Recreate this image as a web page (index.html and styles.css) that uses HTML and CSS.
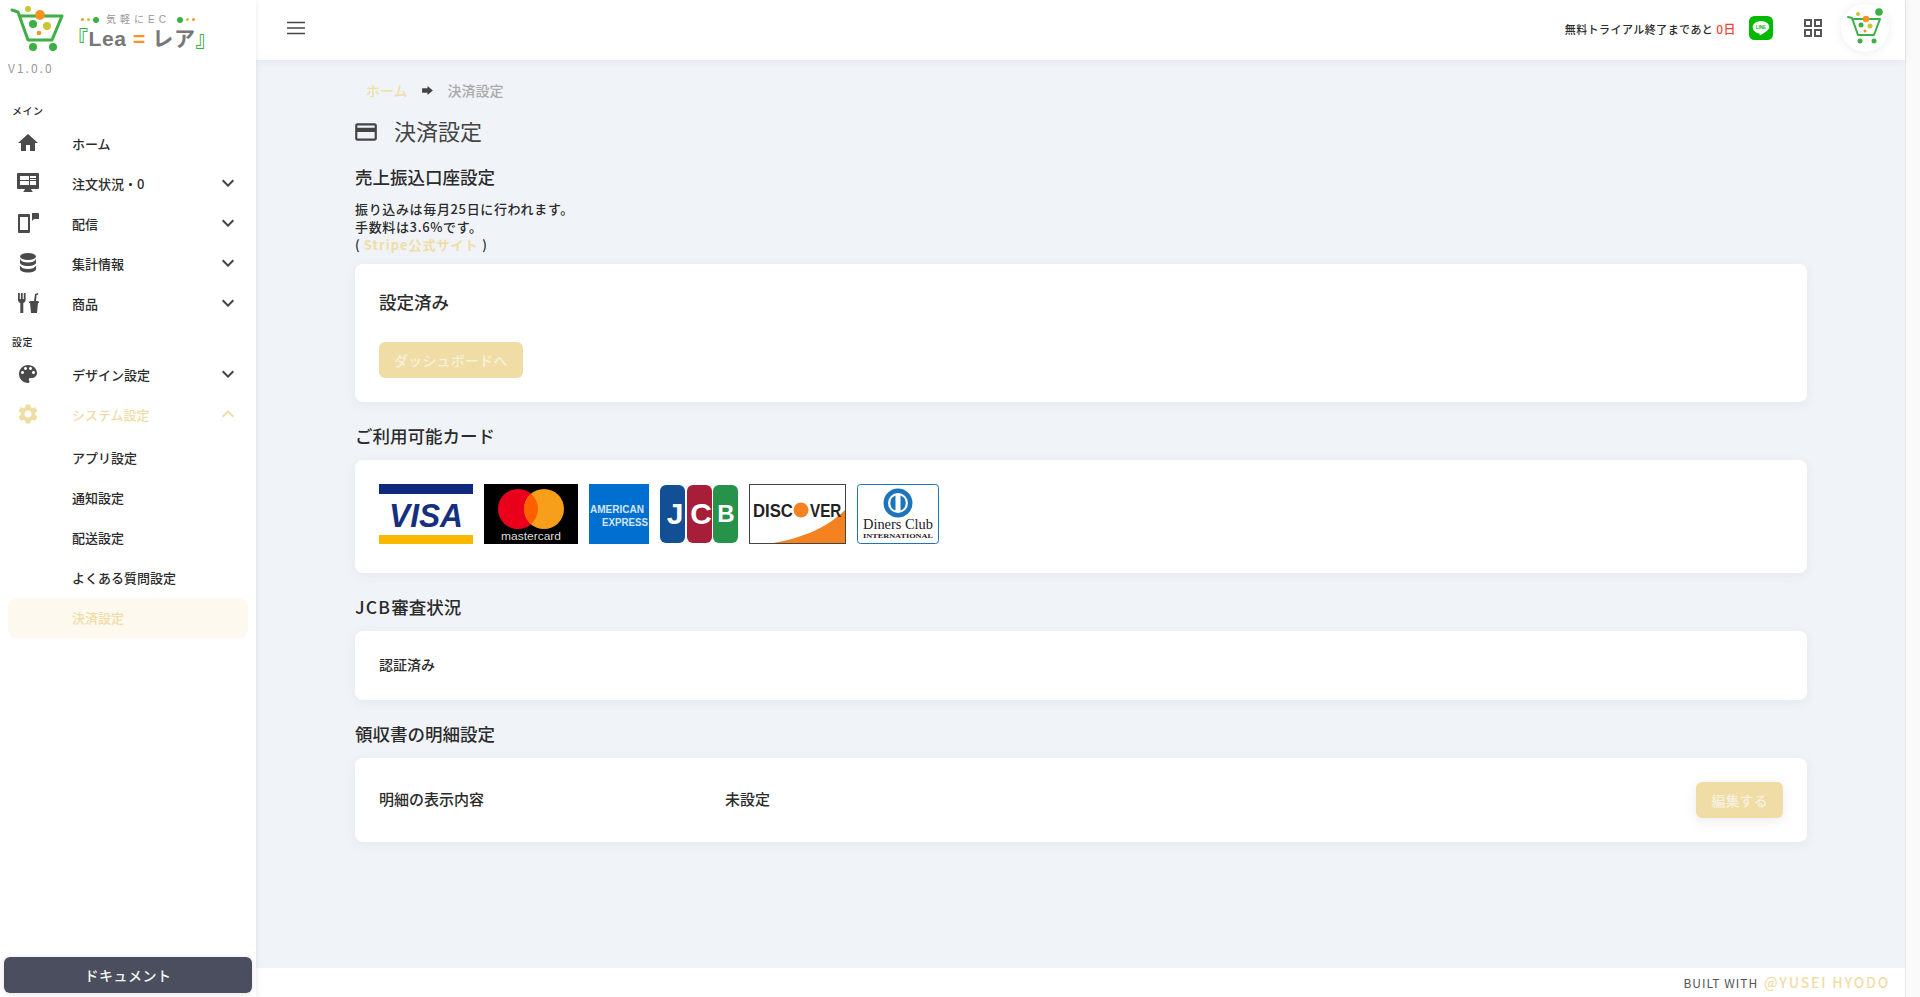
FILE: index.html
```html
<!DOCTYPE html>
<html lang="ja">
<head>
    <meta charset="UTF-8">
    <title>決済設定</title>
    <link rel="stylesheet" href="styles.css">
</head>
<body>
<div class="app">

    <!-- Sidebar -->
    <aside class="sidebar">
        <div class="brand">
            <div class="brand-row">
                <svg class="brand-cart" viewBox="0 0 66 52">
                    <path d="M12 9l6 2 10 28h24l10-24H20" fill="none" stroke="#3cb043" stroke-width="3" stroke-linejoin="round" stroke-linecap="round"/>
                    <circle cx="33" cy="46" r="4" fill="#3cb043"/><circle cx="53" cy="46" r="4" fill="#3cb043"/>
                    <circle cx="28" cy="8" r="3" fill="#c9c62f"/><circle cx="40" cy="14" r="5" fill="#f7931e"/>
                    <circle cx="33" cy="23" r="4" fill="#3cb043"/><circle cx="47" cy="25" r="4" fill="#c9c62f"/>
                    <circle cx="39" cy="32" r="2.3" fill="#f7931e"/>
                </svg>
                <div class="brand-text">
                    <div class="brand-sub">
                        <span class="dot dot-s orange-bg"></span><span class="dot dot-s yellow-bg"></span><span class="dot green-bg"></span>
                        <span class="brand-sub-text">気軽にEC</span>
                        <span class="dot green-bg"></span><span class="dot dot-s yellow-bg"></span><span class="dot dot-s orange-bg"></span>
                    </div>
                    <div class="brand-name"><span class="green">『</span>Lea <span class="orange">=</span> レア<span class="green">』</span></div>
                </div>
            </div>
            <div class="version">V1.0.0</div>
        </div>

        <div class="nav-label">メイン</div>
        <a class="nav-item">
            <svg class="icon" viewBox="0 0 24 24"><path d="M10 20v-6h4v6h5v-8h3L12 3 2 12h3v8z"/></svg>
            <span class="nav-text">ホーム</span>
        </a>
        <a class="nav-item">
            <svg class="icon" viewBox="0 0 24 24"><path fill-rule="evenodd" d="M2 2h20a1 1 0 011 1v14a1 1 0 01-1 1h-7l1 2 1 1H7l1-1 1-2H2a1 1 0 01-1-1V3a1 1 0 011-1zm2 3v4h9V5zm10 0v2h6V5zm0 3v1h6V8zM4 10v4h9v-4zm10 0v4h6v-4z"/></svg>
            <span class="nav-text">注文状況・0</span>
            <svg class="chevron" viewBox="0 0 24 24"><path d="M7.41 8.59L12 13.17l4.59-4.58L18 10l-6 6-6-6z"/></svg>
        </a>
        <a class="nav-item">
            <svg class="icon" viewBox="0 0 24 24"><path fill-rule="evenodd" d="M3 3h10a1 1 0 011 1v17a1 1 0 01-1 1H3a1 1 0 01-1-1V4a1 1 0 011-1zm1 3v13h8V6z"/><path d="M16 2h6a1 1 0 011 1v5h-5l-2 2z"/></svg>
            <span class="nav-text">配信</span>
            <svg class="chevron" viewBox="0 0 24 24"><path d="M7.41 8.59L12 13.17l4.59-4.58L18 10l-6 6-6-6z"/></svg>
        </a>
        <a class="nav-item">
            <svg class="icon" viewBox="0 0 24 24"><ellipse cx="12" cy="5.5" rx="8" ry="3.5"/><path d="M4 8c1 2.500 4 3.500 8 3.500s7-1 8-3.500v3.500c0 2-3.600 3.500-8 3.500s-8-1.500-8-3.500z"/><path d="M4 14.500c1 2.500 4 3.500 8 3.500s7-1 8-3.500V18c0 2-3.600 3.500-8 3.500S4 20 4 18z"/></svg>
            <span class="nav-text">集計情報</span>
            <svg class="chevron" viewBox="0 0 24 24"><path d="M7.41 8.59L12 13.17l4.59-4.58L18 10l-6 6-6-6z"/></svg>
        </a>
        <a class="nav-item">
            <svg class="icon" viewBox="0 0 24 24"><path d="M2 2h1.800v6h1.100V2h1.800v6h1.100V2h1.800v7c0 1.500-1 2.500-2.300 3v10H4.300V12C3 11.500 2 10.500 2 9z"/><path d="M14.500 10h7.500l1 1v1h-1l-1 10h-6l-1-10h-1v-1zM18 10l1-7 3-1 .4 1.500-1.800.6-.6 5.900z"/></svg>
            <span class="nav-text">商品</span>
            <svg class="chevron" viewBox="0 0 24 24"><path d="M7.41 8.59L12 13.17l4.59-4.58L18 10l-6 6-6-6z"/></svg>
        </a>

        <div class="nav-label second">設定</div>
        <a class="nav-item">
            <svg class="icon" viewBox="0 0 24 24"><path d="M12 3c-4.970 0-9 4.030-9 9s4.030 9 9 9c.83 0 1.500-.67 1.500-1.500 0-.39-.15-.74-.39-1.010-.23-.26-.38-.61-.38-.99 0-.83.67-1.500 1.500-1.500H16c2.760 0 5-2.240 5-5 0-4.420-4.030-8-9-8zm-5.500 9c-.83 0-1.500-.67-1.500-1.500S5.670 9 6.500 9 8 9.670 8 10.500 7.330 12 6.500 12zm3-4C8.670 8 8 7.330 8 6.500S8.670 5 9.500 5s1.500.67 1.500 1.500S10.330 8 9.500 8zm5 0c-.83 0-1.500-.67-1.500-1.500S13.670 5 14.500 5s1.500.67 1.500 1.500S15.330 8 14.500 8zm3 4c-.83 0-1.500-.67-1.500-1.500S16.670 9 17.500 9s1.500.67 1.500 1.500-.67 1.500-1.500 1.500z"/></svg>
            <span class="nav-text">デザイン設定</span>
            <svg class="chevron" viewBox="0 0 24 24"><path d="M7.41 8.59L12 13.17l4.59-4.58L18 10l-6 6-6-6z"/></svg>
        </a>
        <a class="nav-item open">
            <svg class="icon" viewBox="0 0 24 24"><path d="M19.140 12.940c.04-.3.06-.61.06-.94 0-.32-.02-.64-.07-.94l2.030-1.580c.18-.14.23-.41.12-.61l-1.920-3.320c-.12-.22-.37-.29-.59-.22l-2.390.96c-.5-.38-1.030-.7-1.620-.94l-.36-2.540c-.04-.24-.24-.41-.48-.41h-3.840c-.24 0-.43.17-.47.41l-.36 2.540c-.59.24-1.130.57-1.620.94l-2.390-.96c-.22-.08-.47 0-.59.22L2.740 8.870c-.12.21-.08.47.12.61l2.030 1.580c-.05.3-.09.63-.09.94s.02.64.07.94l-2.030 1.580c-.18.14-.23.41-.12.61l1.920 3.320c.12.22.37.29.59.22l2.390-.96c.5.38 1.030.7 1.620.94l.36 2.540c.05.24.24.41.48.41h3.840c.24 0 .44-.17.47-.41l.36-2.540c.59-.24 1.130-.56 1.620-.94l2.390.96c.22.08.47 0 .59-.22l1.920-3.320c.12-.22.07-.47-.12-.61l-2.010-1.580zM12 15.600c-1.980 0-3.600-1.620-3.600-3.600s1.620-3.600 3.600-3.600 3.600 1.620 3.600 3.600-1.620 3.600-3.600 3.600z"/></svg>
            <span class="nav-text">システム設定</span>
            <svg class="chevron" viewBox="0 0 24 24"><path d="M12 8l-6 6 1.410 1.410L12 10.830l4.590 4.580L18 14z"/></svg>
        </a>
        <div class="sub-nav">
            <a class="sub-item">アプリ設定</a>
            <a class="sub-item">通知設定</a>
            <a class="sub-item">配送設定</a>
            <a class="sub-item">よくある質問設定</a>
            <a class="sub-item active">決済設定</a>
        </div>

        <button class="doc-btn">ドキュメント</button>
    </aside>

    <div class="right">
        <!-- Header -->
        <header class="topbar">
            <svg class="menu-icon" viewBox="0 0 24 24"><path d="M3 6.500h18M3 12h18M3 17.500h18" stroke="#444" stroke-width="1.700" fill="none"/></svg>
            <div class="trial">無料トライアル終了まであと <span class="red">0日</span></div>
            <svg class="line-icon" viewBox="0 0 24 24">
                <rect width="24" height="24" rx="5.500" fill="#00b900"/>
                <path d="M12 5c-4.700 0-8.300 2.800-8.300 6.300 0 3.100 2.800 5.600 6.600 6.200.6.100.4.800.3 1.500 0 .4.300.5.700.3 1.800-1 6.700-3.900 8.100-6 .6-.8.900-1.300.9-2C20.300 7.800 16.700 5 12 5z" fill="#fff"/>
                <text x="12" y="13" text-anchor="middle" class="line-text">LINE</text>
            </svg>
            <svg class="grid-icon" viewBox="0 0 18 18"><path fill="none" stroke="#555" stroke-width="2" d="M1 1h6v6H1zM11 1h6v6h-6zM1 11h6v6H1zM11 11h6v6h-6z"/></svg>
            <div class="avatar">
                <svg viewBox="0 0 40 40" width="40" height="40">
                    <path d="M3 9l4 1 6 17h16l6-16H9" fill="none" stroke="#3cb043" stroke-width="2" stroke-linejoin="round" stroke-linecap="round"/>
                    <circle cx="15" cy="33" r="2.500" fill="#3cb043"/><circle cx="29" cy="33" r="2.500" fill="#3cb043"/>
                    <circle cx="13" cy="6" r="2" fill="#c9c62f"/><circle cx="21" cy="11" r="3.200" fill="#f7931e"/>
                    <circle cx="16" cy="17" r="2.500" fill="#3cb043"/><circle cx="25" cy="18" r="2.500" fill="#c9c62f"/>
                    <circle cx="20" cy="23" r="1.500" fill="#f7931e"/><circle cx="34" cy="4" r="3.800" fill="#3cb043"/>
                </svg>
            </div>
        </header>

        <main class="main">
            <nav class="breadcrumb">
                <a class="accent">ホーム</a>
                <svg class="crumb-arrow" viewBox="0 0 12 10"><path d="M0 2.500h6V0l6 5-6 5V7.500H0z"/></svg>
                <span>決済設定</span>
            </nav>

            <h1 class="page-title">
                <svg viewBox="0 0 24 24"><path d="M20 4H4c-1.110 0-1.990.89-1.990 2L2 18c0 1.110.89 2 2 2h16c1.110 0 2-.89 2-2V6c0-1.110-.89-2-2-2zm0 14H4v-6h16v6zm0-10H4V6h16v2z"/></svg>
                決済設定
            </h1>

            <h2 class="section-title first">売上振込口座設定</h2>
            <p class="note">振り込みは毎月25日に行われます。<br>手数料は3.6%です。<br>( <a class="accent strong">Stripe公式サイト</a> )</p>

            <section class="card card-bank">
                <h3 class="card-title">設定済み</h3>
                <button class="btn">ダッシュボードへ</button>
            </section>

            <h2 class="section-title">ご利用可能カード</h2>
            <section class="card card-brands">
                <svg class="brand-logo" width="94" height="60" viewBox="0 0 94 60">
                    <rect width="94" height="60" fill="#fff"/><rect width="94" height="10" fill="#0f2a7c"/><rect y="51" width="94" height="9" fill="#fbb800"/>
                    <text x="10" y="43" class="visa-text" textLength="74" lengthAdjust="spacingAndGlyphs">VISA</text>
                </svg>
                <svg class="brand-logo" width="94" height="60" viewBox="0 0 94 60">
                    <rect width="94" height="60" fill="#000"/>
                    <circle cx="34" cy="25" r="20" fill="#eb001b"/><circle cx="60" cy="25" r="20" fill="#f79e1b"/>
                    <path d="M47 9.800a20 20 0 010 30.400 20 20 0 010-30.400z" fill="#ff5f00"/>
                    <text x="17" y="56" class="mc-text" textLength="60" lengthAdjust="spacingAndGlyphs">mastercard</text>
                </svg>
                <svg class="brand-logo" width="60" height="60" viewBox="0 0 60 60">
                    <rect width="60" height="60" fill="#016fd0"/>
                    <text x="1" y="29" class="amex-text" textLength="54" lengthAdjust="spacingAndGlyphs">AMERICAN</text>
                    <text x="13" y="42" class="amex-text" textLength="46" lengthAdjust="spacingAndGlyphs">EXPRESS</text>
                </svg>
                <svg class="brand-logo" width="78" height="60" viewBox="0 0 78 60">
                    <rect y="1" width="25" height="58" rx="6" fill="#134f95"/>
                    <rect x="27" y="1" width="25" height="58" rx="6" fill="#a61e37"/>
                    <rect x="53" y="1" width="25" height="58" rx="6" fill="#27924a"/>
                    <text x="15" y="40" text-anchor="middle" class="jcb-text">J</text>
                    <text x="41" y="40" text-anchor="middle" class="jcb-text">C</text>
                    <text x="66" y="38" text-anchor="middle" class="jcb-text jcb-b">B</text>
                </svg>
                <svg class="brand-logo" width="97" height="60" viewBox="0 0 97 60">
                    <rect x=".5" y=".5" width="96" height="59" fill="#fff" stroke="#444"/>
                    <path d="M24 59C55 54 80 42 96 26v33z" fill="#f58220"/>
                    <circle cx="52" cy="26" r="7.500" fill="#f58220"/>
                    <text transform="translate(4 33) scale(.88 1)" class="disc-text">DISC</text>
                    <text x="46" y="32" class="disc-text disc-o">O</text>
                    <text transform="translate(61 33) scale(.8 1)" class="disc-text">VER</text>
                </svg>
                <svg class="brand-logo" width="82" height="60" viewBox="0 0 82 60">
                    <rect x=".5" y=".5" width="81" height="59" rx="3" fill="#fff" stroke="#1c75bc"/>
                    <circle cx="41" cy="19" r="14.500" fill="#1c75bc"/><circle cx="41" cy="19" r="10" fill="#fff"/>
                    <path d="M38.500 11.500a8 8 0 000 15zM43.500 11.500a8 8 0 010 15z" fill="#1c75bc"/>
                    <text x="6" y="45" class="diners-text" textLength="70" lengthAdjust="spacingAndGlyphs">Diners Club</text>
                    <text x="6" y="54" class="diners-sub" textLength="70" lengthAdjust="spacingAndGlyphs">INTERNATIONAL</text>
                </svg>
            </section>

            <h2 class="section-title"><span class="latin">JCB</span>審査状況</h2>
            <section class="card card-jcb">認証済み</section>

            <h2 class="section-title">領収書の明細設定</h2>
            <section class="card card-receipt">
                <span class="receipt-label">明細の表示内容</span>
                <span class="receipt-value">未設定</span>
                <button class="btn btn-edit">編集する</button>
            </section>
        </main>

        <footer class="footer">BUILT WITH <a class="accent footer-link">@YUSEI HYODO</a></footer>
    </div>

    <div class="scrollbar"></div>
</div>
</body>
</html>
```

FILE: styles.css
```css
* {
    box-sizing: border-box;
}
body {
    margin: 0;
    background-color: #f0f4f8;
    color: #2b2b2b;
    font-family: "Noto Sans CJK JP", "Noto Sans", sans-serif;
    font-size: 13px;
}
h1, h2, h3, p {
    margin: 0;
}
.app {
    display: flex;
    height: 997px;
    overflow: hidden;
}
.accent {
    color: #f0dda6;
}
.strong {
    font-weight: 700;
    letter-spacing: 1px;
}

/* Sidebar */
.sidebar {
    position: relative;
    z-index: 2;
    display: flex;
    flex-direction: column;
    width: 256px;
    flex-shrink: 0;
    background-color: #fff;
    box-shadow: 0 0 6px rgba(60, 70, 90, 0.12);
}
.brand {
    height: 103px;
    padding-top: 1px;
}
.brand-row {
    display: flex;
    align-items: flex-start;
    height: 52px;
}
.brand-cart {
    flex-shrink: 0;
    width: 66px;
    height: 52px;
    margin-right: 8px;
}
.brand-text {
    padding-top: 11px;
    color: #777;
    font-family: "Liberation Sans", "Noto Sans CJK JP", sans-serif;
}
.brand-sub {
    display: flex;
    align-items: center;
    justify-content: center;
    gap: 3px;
    width: 128px;
    height: 15px;
    color: #999;
}
.brand-sub-text {
    margin: 0 4px;
    font-size: 10px;
    line-height: 15px;
    letter-spacing: 4px;
}
.dot {
    width: 6px;
    height: 6px;
    border-radius: 50%;
}
.dot-s {
    width: 3px;
    height: 3px;
}
.green-bg {
    background-color: #3cb043;
}
.yellow-bg {
    background-color: #c9c62f;
}
.orange-bg {
    background-color: #f7931e;
}
.brand-name {
    height: 24px;
    margin-left: -7px;
    font-size: 21px;
    font-weight: 700;
    line-height: 24px;
    letter-spacing: 0.6px;
    white-space: nowrap;
    color: #777;
}
.green {
    color: #3cb043;
}
.orange {
    color: #f7931e;
}
.version {
    margin-top: 7px;
    padding-left: 8px;
    font-size: 12px;
    line-height: 16px;
    letter-spacing: 2px;
    color: #999;
}
.nav-label {
    height: 20px;
    padding-left: 12px;
    font-size: 10px;
    font-weight: 500;
    line-height: 16px;
    letter-spacing: 0.5px;
}
.nav-label.second {
    margin-top: 11px;
}
.nav-item {
    display: flex;
    align-items: center;
    height: 40px;
    padding: 0 16px;
    color: #2b2b2b;
}
.icon {
    width: 24px;
    height: 24px;
    margin-right: 32px;
    margin-top: -1px;
    fill: #4a4a4a;
}
.nav-text {
    flex: 1;
    font-weight: 500;
}
.chevron {
    width: 24px;
    height: 24px;
    margin-top: -1px;
    fill: #444;
}
.nav-item.open {
    color: #f0dda6;
}
.nav-item.open .icon, .nav-item.open .chevron {
    fill: #f0dda6;
}
.sub-nav {
    margin-top: 4px;
}
.sub-item {
    display: block;
    height: 40px;
    margin: 0 8px;
    padding-left: 64px;
    border-radius: 8px;
    font-weight: 500;
    line-height: 39px;
    color: #2b2b2b;
}
.sub-item.active {
    background-color: #fdf9ef;
    color: #f0dda6;
}
.doc-btn {
    margin: auto 4px 4px;
    height: 36px;
    border: 0;
    border-radius: 6px;
    background-color: #4a4e5e;
    color: #f4f4f4;
    font-family: inherit;
    font-size: 14px;
    font-weight: 500;
    letter-spacing: 0.5px;
    box-shadow: 0 1px 6px rgba(0, 0, 0, 0.12);
}

/* Header */
.right {
    display: flex;
    flex-direction: column;
    flex: 1;
    min-width: 0;
}
.topbar {
    position: relative;
    z-index: 1;
    display: flex;
    align-items: center;
    flex-shrink: 0;
    height: 60px;
    padding: 0 16px 4px 28px;
    background-color: #fff;
    box-shadow: 0 1px 8px rgba(60, 70, 90, 0.08);
}
.menu-icon {
    width: 24px;
    height: 24px;
}
.trial {
    margin-left: auto;
    font-size: 11px;
    font-weight: 500;
    letter-spacing: 0.45px;
}
.red {
    color: #f44336;
    font-size: 12px;
}
.line-icon {
    width: 24px;
    height: 24px;
    margin-left: 13px;
}
.line-text {
    font-family: "Liberation Sans", sans-serif;
    font-size: 4.500px;
    font-weight: 700;
    fill: #00b900;
}
.grid-icon {
    width: 18px;
    height: 18px;
    margin-left: 31px;
}
.avatar {
    display: flex;
    align-items: center;
    justify-content: center;
    width: 48px;
    height: 48px;
    margin-left: 19px;
    border-radius: 50%;
    background-color: #fff;
    box-shadow: 0 1px 8px rgba(60, 70, 90, 0.1);
}

/* Main */
.main {
    flex: 1;
    padding: 20px 98px 0 99px;
    min-height: 0;
}
.breadcrumb {
    display: flex;
    align-items: center;
    height: 20px;
    padding-left: 11px;
    font-size: 14px;
    font-weight: 500;
    color: #aaa;
}
.crumb-arrow {
    width: 11px;
    height: 9px;
    margin: 0 15px 0 14px;
    fill: #444;
}
.page-title {
    display: flex;
    align-items: center;
    height: 32px;
    margin-top: 14px;
    font-size: 22px;
    font-weight: 400;
    color: #444;
}
.page-title svg {
    width: 26px;
    height: 26px;
    margin: 4px 15px 0 -2px;
    fill: #444;
}
.section-title {
    height: 26px;
    margin-top: 22px;
    font-size: 17.500px;
    font-weight: 500;
    line-height: 24px;
}
.section-title.first {
    margin-top: 18px;
    line-height: 26px;
}
.latin {
    letter-spacing: 1.200px;
}
.note {
    margin-top: 10px;
    font-size: 13px;
    font-weight: 500;
    line-height: 18px;
    letter-spacing: 0.650px;
    height: 54px;
}
.card {
    border-radius: 8px;
    background-color: #fff;
    box-shadow: 0 2px 12px rgba(60, 70, 90, 0.07);
    padding: 0 24px;
}
.card-bank {
    height: 138px;
    margin-top: 10px;
    padding-top: 25px;
}
.card-title {
    height: 26px;
    font-size: 17.500px;
    font-weight: 500;
    line-height: 26px;
}
.btn {
    display: block;
    height: 36px;
    margin-top: 27px;
    padding: 0 15px;
    border: 0;
    border-radius: 6px;
    background-color: #f0dda6;
    color: #f7f1dc;
    font-family: inherit;
    font-size: 14px;
    font-weight: 500;
    letter-spacing: 0.2px;
}
.card-brands {
    display: flex;
    gap: 11px;
    height: 113px;
    margin-top: 10px;
    padding-top: 24px;
}
.brand-logo {
    flex-shrink: 0;
}
.visa-text {
    font-family: "Liberation Sans", sans-serif;
    font-size: 34px;
    font-weight: 700;
    font-style: italic;
    fill: #14307f;
}
.mc-text {
    font-family: "Liberation Sans", sans-serif;
    font-size: 11px;
    fill: #ddd;
}
.amex-text {
    font-family: "Liberation Sans", sans-serif;
    font-size: 10px;
    font-weight: 700;
    fill: #d3e6f8;
}
.jcb-text {
    font-family: "Liberation Sans", sans-serif;
    font-size: 30px;
    font-weight: 700;
    fill: #fff;
}
.jcb-b {
    font-size: 24px;
}
.disc-text {
    font-family: "Liberation Sans", sans-serif;
    font-size: 19px;
    font-weight: 700;
    fill: #222;
}
.disc-o {
    font-size: 16px;
    fill: #f58220;
}
.diners-text {
    font-family: "Liberation Serif", serif;
    font-size: 14px;
    fill: #222;
}
.diners-sub {
    font-family: "Liberation Serif", serif;
    font-size: 7px;
    font-weight: 700;
    fill: #222;
}
.card-jcb {
    height: 69px;
    margin-top: 10px;
    font-size: 14px;
    font-weight: 500;
    line-height: 67px;
}
.card-receipt {
    display: flex;
    align-items: center;
    height: 84px;
    margin-top: 10px;
    font-size: 15px;
    font-weight: 500;
}
.receipt-label {
    width: 346px;
    padding-bottom: 3px;
}
.receipt-value {
    padding-bottom: 3px;
}
.btn-edit {
    margin: 0 0 0 auto;
    box-shadow: 0 3px 12px rgba(60, 70, 90, 0.1);
}

/* Footer */
.footer {
    flex-shrink: 0;
    height: 29px;
    padding-right: 15px;
    background-color: #fff;
    font-size: 12px;
    line-height: 29px;
    letter-spacing: 1px;
    text-align: right;
    color: #555;
}
.footer-link {
    margin-left: 2px;
    font-size: 14px;
    font-weight: 500;
    letter-spacing: 1.800px;
}
.scrollbar {
    flex-shrink: 0;
    width: 15px;
    background-color: #fafafa;
    border-left: 1px solid #e8e8e8;
}
```
